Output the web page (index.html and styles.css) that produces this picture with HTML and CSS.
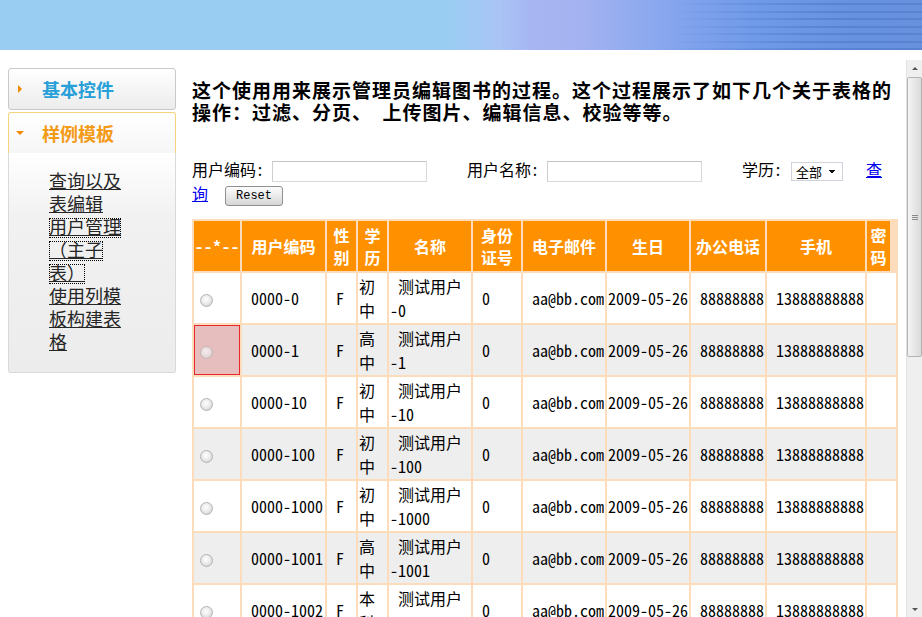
FILE: index.html
```html
<!DOCTYPE html>
<html lang="zh-CN">
<head>
<meta charset="utf-8">
<title>用户管理（主子表）</title>
<link rel="stylesheet" href="styles.css">
</head>
<body>
<header class="banner"><div class="banner-stripes"></div></header>
<div class="layout">
  <nav class="sidebar">
    <section class="panel">
      <h2 class="panel-head"><span class="arrow arrow-right"></span><span class="panel-title">基本控件</span></h2>
    </section>
    <section class="panel panel-open">
      <h2 class="panel-head"><span class="arrow arrow-down"></span><span class="panel-title">样例模板</span></h2>
      <ul class="panel-links">
        <li><a href="#">查询以及表编辑</a></li>
        <li><a href="#" class="focused"><span class="frag">用户管理</span><span class="frag">（主子</span><span class="frag">表）</span></a></li>
        <li><a href="#">使用列模板构建表格</a></li>
      </ul>
    </section>
  </nav>
  <div class="frame">
    <main class="frame-content">
      <h1 class="intro">这个使用用来展示管理员编辑图书的过程。这个过程展示了如下几个关于表格的操作：过滤、分页、 上传图片、编辑信息、校验等等。</h1>
      <form class="filter"><label class="flabel" for="f-code">用户编码:</label><input id="f-code" class="ftext" type="text"><label class="flabel" for="f-name">用户名称:</label><input id="f-name" class="ftext" type="text"><label class="flabel flabel-short" for="f-edu">学历:</label><select id="f-edu" class="fselect"><option>全部</option></select><a href="#" class="query">查询</a> <button type="button" class="reset">Reset</button></form>
      <table class="grid">
        <colgroup>
          <col style="width:46px"><col style="width:83px"><col style="width:29px"><col style="width:29px"><col style="width:82px"><col style="width:48px"><col style="width:82px"><col style="width:82px"><col style="width:74px"><col style="width:98px"><col style="width:29px">
        </colgroup>
        <thead>
          <tr><th class="sel-head">--*--</th><th>用户编码</th><th>性别</th><th>学历</th><th>名称</th><th>身份证号</th><th>电子邮件</th><th>生日</th><th>办公电话</th><th>手机</th><th class="pwd">密码</th></tr>
        </thead>
        <tbody>
          <tr><td class="pick"><input type="radio" name="row"></td><td>0000-0</td><td>F</td><td class="plain">初中</td><td>测试用户<wbr>-0</td><td>0</td><td>aa@bb.com</td><td class="plain">2009-05-26</td><td>88888888</td><td>13888888888</td><td></td></tr>
          <tr><td class="pick sel"><input type="radio" name="row"></td><td>0000-1</td><td>F</td><td class="plain">高中</td><td>测试用户<wbr>-1</td><td>0</td><td>aa@bb.com</td><td class="plain">2009-05-26</td><td>88888888</td><td>13888888888</td><td></td></tr>
          <tr><td class="pick"><input type="radio" name="row"></td><td>0000-10</td><td>F</td><td class="plain">初中</td><td>测试用户<wbr>-10</td><td>0</td><td>aa@bb.com</td><td class="plain">2009-05-26</td><td>88888888</td><td>13888888888</td><td></td></tr>
          <tr><td class="pick"><input type="radio" name="row"></td><td>0000-100</td><td>F</td><td class="plain">初中</td><td>测试用户<wbr>-100</td><td>0</td><td>aa@bb.com</td><td class="plain">2009-05-26</td><td>88888888</td><td>13888888888</td><td></td></tr>
          <tr><td class="pick"><input type="radio" name="row"></td><td>0000-1000</td><td>F</td><td class="plain">初中</td><td>测试用户<wbr>-1000</td><td>0</td><td>aa@bb.com</td><td class="plain">2009-05-26</td><td>88888888</td><td>13888888888</td><td></td></tr>
          <tr><td class="pick"><input type="radio" name="row"></td><td>0000-1001</td><td>F</td><td class="plain">高中</td><td>测试用户<wbr>-1001</td><td>0</td><td>aa@bb.com</td><td class="plain">2009-05-26</td><td>88888888</td><td>13888888888</td><td></td></tr>
          <tr><td class="pick"><input type="radio" name="row"></td><td>0000-1002</td><td>F</td><td class="plain">本科</td><td>测试用户<wbr>-1002</td><td>0</td><td>aa@bb.com</td><td class="plain">2009-05-26</td><td>88888888</td><td>13888888888</td><td></td></tr>
          <tr><td class="pick"><input type="radio" name="row"></td><td>0000-1003</td><td>F</td><td class="plain">大专</td><td>测试用户<wbr>-1003</td><td>0</td><td>aa@bb.com</td><td class="plain">2009-05-26</td><td>88888888</td><td>13888888888</td><td></td></tr>
          <tr><td class="pick"><input type="radio" name="row"></td><td>0000-1004</td><td>F</td><td class="plain">初中</td><td>测试用户<wbr>-1004</td><td>0</td><td>aa@bb.com</td><td class="plain">2009-05-26</td><td>88888888</td><td>13888888888</td><td></td></tr>
          <tr><td class="pick"><input type="radio" name="row"></td><td>0000-1005</td><td>F</td><td class="plain">高中</td><td>测试用户<wbr>-1005</td><td>0</td><td>aa@bb.com</td><td class="plain">2009-05-26</td><td>88888888</td><td>13888888888</td><td></td></tr>
        </tbody>
      </table>
    </main>
    <div class="scrollbar" aria-hidden="true">
      <div class="sb-btn sb-up"></div>
      <div class="sb-track"><div class="sb-thumb"></div></div>
      <div class="sb-btn sb-down"></div>
    </div>
  </div>
</div>
</body>
</html>
```

FILE: styles.css
```css
* { box-sizing: border-box; }
html, body { margin: 0; height: 100%; }
body {
  font-family: "Noto Sans Mono CJK SC", "Noto Sans CJK SC", sans-serif;
  font-size: 16px;
  color: #000;
  background: #fff;
  overflow: hidden;
}

/* banner */
.banner {
  height: 50px;
  display: flex;
  justify-content: flex-end;
  background: linear-gradient(to right, #99cdf2 0, #99cdf2 445px, #a9c4f5 500px, #a7b6f3 530px, #a5b2f1 580px, #93acef 630px, #80a2ed 690px, #6f9ae8 760px, #6692e0 850px, #6891dd 922px);
}
.banner-stripes {
  width: 250px;
  background: repeating-linear-gradient(to bottom, transparent 0, transparent 3px, rgba(40, 80, 170, .22) 3px, rgba(40, 80, 170, .22) 5px, transparent 5px, transparent 7.5px);
  -webkit-mask-image: linear-gradient(to right, transparent 0, #000 55%);
  mask-image: linear-gradient(to right, transparent 0, #000 55%);
}

.layout { display: flex; height: calc(100vh - 50px); }

/* sidebar */
.sidebar { width: 168px; flex: none; margin: 18px 0 0 8px; }
.panel + .panel { margin-top: 2px; }
.panel-head {
  margin: 0;
  height: 42px;
  display: flex;
  align-items: center;
  padding-left: 9px;
  border: 1px solid #c9c9c9;
  border-radius: 3px;
  background: linear-gradient(#ffffff, #ececec);
  font: bold 18px "Noto Sans CJK SC", sans-serif;
  color: #279fd8;
}
.arrow { width: 0; height: 0; flex: none; }
.arrow-right {
  border-left: 4px solid #f08a00;
  border-top: 4px solid transparent;
  border-bottom: 4px solid transparent;
  margin-right: 20px;
}
.arrow-down {
  border-top: 4px solid #f08a00;
  border-left: 4px solid transparent;
  border-right: 4px solid transparent;
  margin-left: -2px;
  margin-right: 18px;
}
.panel-open .panel-head {
  height: 41px;
  border-color: #f6d47c;
  border-bottom: 0;
  border-radius: 3px 3px 0 0;
  background: linear-gradient(#ffffff, #f6f6f6);
  color: #f39a17;
}
.panel-links {
  list-style: none;
  margin: 0;
  padding: 18px 0 17px 40px;
  border: 1px solid #d9d9d9;
  border-top: 0;
  border-radius: 0 0 3px 3px;
  background: linear-gradient(#ffffff 0, #f1f1f1 30%, #ececec 100%);
}
.panel-links li {
  width: 78px;
  font: 18px/23px "Liberation Sans", "Noto Sans CJK SC", sans-serif;
}
.panel-links a { color: #262626; text-decoration: underline; }
.panel-links a.focused .frag { outline: 1px dotted #000; outline-offset: -1px; }

/* content frame */
.frame { flex: 1; min-width: 0; display: flex; margin: 10px 0 0 8px; }
.frame-content { flex: 1; min-width: 0; overflow: hidden; padding: 8px 8px 0; }

.intro {
  margin: 11px 0 0;
  font-size: 19px;
  font-weight: bold;
  letter-spacing: 1px;
  line-height: 22px;
}

.filter { margin-top: 35px; padding-right: 12px; line-height: 23px; }
.flabel { display: inline-block; width: 80px; }
.flabel-short { width: 49px; }
.ftext {
  width: 155px;
  height: 21px;
  margin: 0 40px 0 0;
  padding: 0 3px;
  vertical-align: middle;
  border: 1px solid #d9d9d9;
  border-top-color: #c4c4c4;
  border-left-color: #cfcfcf;
  background: #fff;
  font: 13px "Noto Sans Mono CJK SC", sans-serif;
}
.fselect {
  -webkit-appearance: none;
  appearance: none;
  width: 52px;
  height: 19px;
  margin: 0 23px 0 0;
  padding: 0 0 0 4px;
  vertical-align: middle;
  border: 1px solid #cfd3dc;
  border-radius: 0;
  font: 13px/17px "Noto Sans CJK SC", sans-serif;
  color: #000;
  background-color: #fff;
  background-image: linear-gradient(to bottom left, #111 50%, transparent 50%), linear-gradient(to bottom right, #111 50%, transparent 50%);
  background-size: 4px 4px, 4px 4px;
  background-position: calc(100% - 10px) 7px, calc(100% - 6px) 7px;
  background-repeat: no-repeat;
}
.query { color: #0000ee; text-decoration: underline; }
.reset {
  width: 58px;
  height: 20px;
  margin: 0 0 0 9px;
  padding: 0;
  vertical-align: middle;
  border: 1px solid #8f8f8f;
  border-radius: 3px;
  background: linear-gradient(#fdfdfd, #e6e6e6 60%, #d6d6d6);
  font: 12px/18px "Liberation Mono", monospace;
  color: #000;
}

/* grid */
.grid {
  width: 706px;
  margin-top: 13px;
  table-layout: fixed;
  border-collapse: separate;
  border-spacing: 2px;
  background: #fddcbb;
}
.grid th {
  height: 50px;
  padding: 3px 1px;
  background: #ff9100;
  color: #fff;
  font-weight: bold;
  line-height: 22px;
  text-align: center;
}
.grid th.sel-head { white-space: nowrap; letter-spacing: 1px; }
.grid th.pwd {
  padding-right: 7px;
  background: linear-gradient(to left, #fddcbb 6px, #ff9100 6px);
}
.grid td {
  height: 50px;
  padding: 1px;
  line-height: 24px;
  background: #fff;
  text-indent: 8px;
}
.grid tbody tr:nth-child(even) td { background: #eeeeee; }
.grid td.plain, .grid td.pick { text-indent: 0; }
.grid tbody tr td.sel { background: #e6bebe; box-shadow: inset 0 0 0 1px #e8262b; }
.grid input[type="radio"] {
  -webkit-appearance: none;
  appearance: none;
  width: 13px;
  height: 13px;
  margin: 0 0 0 5px;
  vertical-align: middle;
  border: 1px solid #b3b3b3;
  border-radius: 50%;
  background: radial-gradient(circle at 45% 40%, #ffffff 0, #ececec 45%, #c8c8c8 100%);
}
.grid td.sel input[type="radio"] { opacity: .7; }

/* scrollbar */
.scrollbar {
  width: 16px;
  flex: none;
  display: flex;
  flex-direction: column;
  background: #efefef;
  border-left: 1px solid #e2e2e2;
}
.sb-btn { height: 16px; flex: none; display: flex; align-items: center; justify-content: center; }
.sb-btn::before { content: ""; width: 0; height: 0; border-left: 3px solid transparent; border-right: 3px solid transparent; }
.sb-up::before { border-bottom: 3px solid #555; }
.sb-down::before { border-top: 3px solid #555; }
.sb-track { flex: 1; }
.sb-thumb {
  height: 280px;
  margin-top: 1px;
  border: 1px solid #b4b4b4;
  border-radius: 2px;
  background:
    linear-gradient(#8a8a8a, #8a8a8a) center calc(50% - 2px) / 6px 1px no-repeat,
    linear-gradient(#8a8a8a, #8a8a8a) center center / 6px 1px no-repeat,
    linear-gradient(#8a8a8a, #8a8a8a) center calc(50% + 2px) / 6px 1px no-repeat,
    linear-gradient(to right, #f4f4f4, #dadada);
}
```
